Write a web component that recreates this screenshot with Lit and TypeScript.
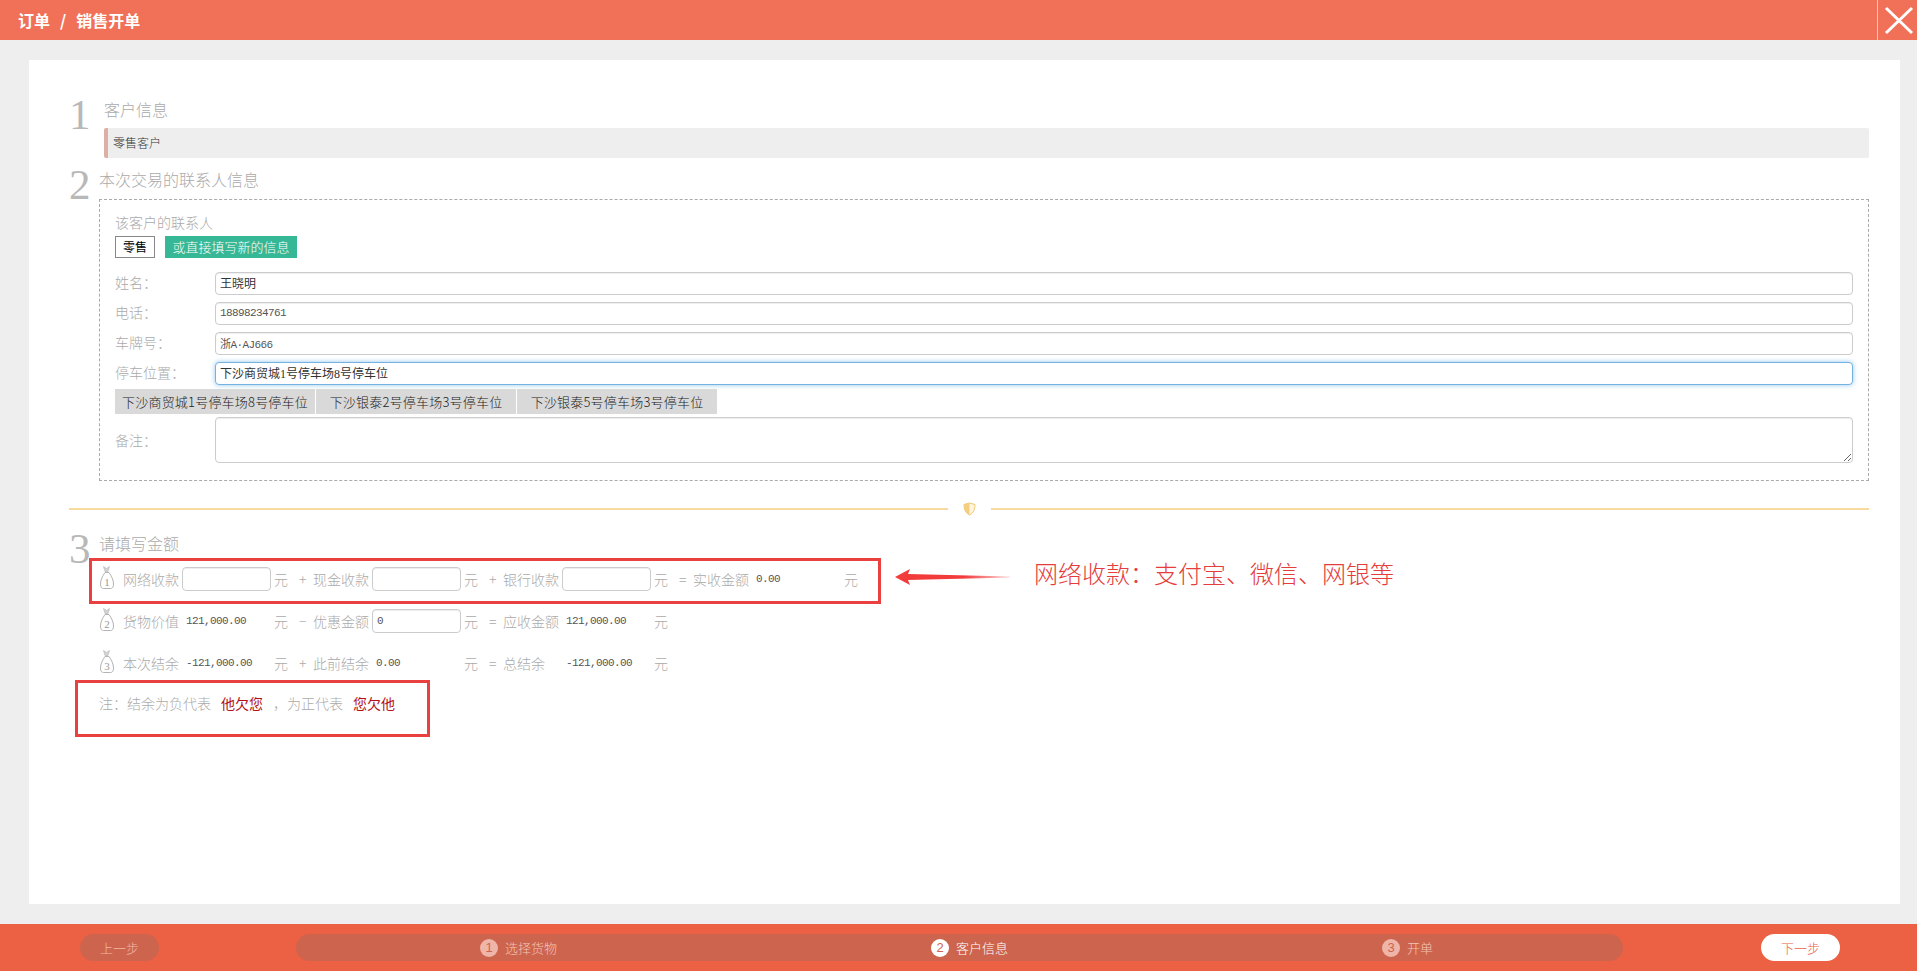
import { css, html, LitElement } from 'lit';
import { customElement } from 'lit/decorators.js';

const bag = (n: number) => html`
  <svg class="bag" width="16" height="25" viewBox="0 0 16 25">
    <path d="M4.500 1.500l3 2 3-2-1.500 5H6z" fill="#d4d4d4" stroke="#b4b4b4" stroke-width=".6" />
    <path d="M6 7.500C3.500 11 1.500 15 1.500 19c0 3 1 4.500 3 4.500h7c2 0 3-1.500 3-4.500 0-4-2-8-4.500-11.500z" fill="#fff" stroke="#b4b4b4" />
    <text x="8" y="20.500" text-anchor="middle" font-size="11" fill="#999" font-family="Liberation Serif, serif">${n}</text>
  </svg>
`;

@customElement('app-root')
export class AppRoot extends LitElement {
  static styles = css`
    :host {
      display: block;
      height: 971px;
      overflow: hidden;
      background: #eeeeee;
      color: #aaa;
      font-family: 'Noto Sans CJK SC', 'Liberation Sans', sans-serif;
      font-size: 14px;
      font-weight: 300;
    }

    .top {
      display: flex;
      align-items: center;
      justify-content: space-between;
      height: 40px;
      padding-left: 18px;
      background: #f07157;
      color: #fff;
      font-size: 16px;
      font-weight: 700;
    }

    .top .sep {
      margin: 0 10px;
    }

    .close {
      width: 39px;
      height: 40px;
      border-left: 1px solid #f9c4b6;
    }

    .card {
      position: relative;
      box-sizing: border-box;
      height: 844px;
      margin: 20px 17px 20px 29px;
      padding: 40px 31px 0 40px;
      background: #fff;
    }

    .section {
      display: flex;
    }

    .num {
      flex: none;
      width: 30px;
      margin-top: -7px;
      color: #b8b8b8;
      font-family: 'Liberation Serif', serif;
      font-size: 43px;
      line-height: 43px;
    }

    .first .num {
      width: 35px;
    }

    .body {
      flex: 1;
      min-width: 0;
    }

    .title {
      height: 20px;
      font-size: 16px;
      line-height: 18px;
    }

    .bar {
      height: 30px;
      margin-top: 8px;
      padding-left: 5px;
      border-left: 4px solid #dcb0a5;
      border-radius: 2px;
      background: #eeeeee;
      color: #333;
      font-size: 12px;
      line-height: 30px;
    }

    .second {
      margin-top: 12px;
    }

    .box {
      margin-top: 9px;
      padding: 13px 15px 17px;
      border: 1px dashed #aaa;
    }

    .sub {
      height: 20px;
      line-height: 18px;
    }

    .picks {
      display: flex;
      gap: 10px;
      margin: 3px 0 14px;
    }

    .pick {
      box-sizing: border-box;
      height: 22px;
      font-size: 13px;
      line-height: 20px;
      text-align: center;
    }

    .pick.person {
      width: 40px;
      border: 1px solid #888;
      color: #000;
      font-size: 12px;
      font-weight: 400;
    }

    .pick.fresh {
      width: 132px;
      background: #36b795;
      color: #fff;
      line-height: 22px;
    }

    .field {
      display: flex;
      align-items: center;
      margin-bottom: 7px;
    }

    .field label {
      flex: none;
      width: 100px;
      margin-top: -4px;
    }

    input,
    textarea {
      box-sizing: border-box;
      padding: 0 4px;
      border: 1px solid #ccc;
      border-radius: 4px;
      outline: none;
      background: #fff;
      box-shadow: inset 0 1px 1px rgba(0, 0, 0, 0.07);
      color: #333;
      font-family: 'Liberation Serif', 'Noto Sans CJK SC', serif;
      font-size: 12px;
    }

    .field input {
      flex: 1;
      height: 23px;
      padding-bottom: 2px;
    }

    .field input.mono,
    .money input {
      color: #555;
      font-family: 'Liberation Mono', 'Noto Sans CJK SC', monospace;
      font-size: 11px;
      letter-spacing: -0.6px;
    }

    .field input.on {
      border-color: #74b2e2;
      box-shadow: 0 0 5px rgba(102, 175, 233, 0.7);
    }

    .chips {
      display: flex;
      gap: 1px;
      margin: -3px 0 3px;
    }

    .chips span {
      width: 200px;
      height: 25px;
      background: #d9d9d9;
      color: #222;
      font-size: 13px;
      line-height: 25px;
      letter-spacing: 0.2px;
      text-align: center;
    }

    .memo {
      display: flex;
      align-items: center;
    }

    .memo label {
      flex: none;
      width: 100px;
    }

    .memo textarea {
      display: block;
      flex: 1;
      height: 46px;
    }

    .rule {
      display: flex;
      align-items: center;
      justify-content: space-between;
      height: 14px;
      margin: 21px 0 18px;
    }

    .rule i {
      flex: 1;
      height: 2px;
      background: #f8d9a0;
    }

    .rule span {
      display: flex;
      flex: none;
      justify-content: center;
      width: 43px;
    }

    .money {
      display: flex;
      align-items: center;
      height: 24px;
      margin-top: 18px;
    }

    .money.lead {
      margin-top: 13px;
    }

    .bag {
      flex: none;
      width: 16px;
      margin: -4px 8px 0 0;
    }

    .money input {
      width: 89px;
      height: 24px;
    }

    .group {
      display: grid;
      flex: none;
      grid-template-columns: 59px 90px 27px 14px;
      align-items: center;
    }

    .group.last {
      grid-template-columns: 62px 89px 20px;
    }

    .unit {
      padding-left: 2px;
    }

    .val {
      padding-left: 4px;
      color: #555;
      font-family: 'Liberation Mono', monospace;
      font-size: 11px;
      font-weight: 400;
      letter-spacing: -0.6px;
    }

    .last .val {
      padding-left: 1px;
    }

    .note {
      height: 20px;
      margin-top: 18px;
      line-height: 20px;
    }

    .note b {
      margin: 0 10px;
      color: #b3101a;
      font-weight: 400;
    }

    .mark {
      position: absolute;
      border: 3px solid #e8413f;
    }

    .mark.net {
      top: 498px;
      left: 60px;
      width: 786px;
      height: 40px;
    }

    .mark.rest {
      top: 620px;
      left: 46px;
      width: 349px;
      height: 51px;
    }

    .arrow {
      position: absolute;
      top: 509px;
      left: 866px;
    }

    .hint {
      position: absolute;
      top: 496px;
      left: 1005px;
      color: #e53c3c;
      font-size: 24px;
      line-height: 34px;
      white-space: nowrap;
    }

    .foot {
      display: flex;
      align-items: center;
      height: 47px;
      background: #ec6044;
      font-size: 13px;
    }

    .round {
      box-sizing: border-box;
      flex: none;
      height: 27px;
      border-radius: 14px;
      background: #cd654e;
      line-height: 27px;
      text-align: center;
    }

    .prev {
      width: 79px;
      margin: 0 137px 0 80px;
      color: #f3b7a8;
    }

    .next {
      width: 79px;
      margin-left: 138px;
      background: #fff;
      color: #ec6044;
    }

    .steps {
      display: grid;
      grid-template-columns: 451px 451px 1fr;
      width: 1327px;
      padding-left: 184px;
      text-align: left;
    }

    .step {
      display: flex;
      align-items: center;
      gap: 7px;
      color: #f4c3b6;
    }

    .step em {
      width: 18px;
      height: 18px;
      border-radius: 50%;
      background: #efb5a8;
      color: #cd654e;
      font-family: 'Liberation Sans', sans-serif;
      font-style: normal;
      line-height: 18px;
      text-align: center;
    }

    .step.on {
      color: #fff;
    }

    .step.on em {
      background: #fff;
    }
  `;

  render() {
    return html`
      <header class="top">
        <div>订单<span class="sep">/</span>销售开单</div>
        <div class="close">
          <svg width="39" height="40" viewBox="0 0 39 40">
            <path d="M8 8l26 25M34 8L8 33" stroke="#fff" stroke-width="3" fill="none" />
          </svg>
        </div>
      </header>

      <main class="card">
        <section class="section first">
          <div class="num">1</div>
          <div class="body">
            <div class="title">客户信息</div>
            <div class="bar">零售客户</div>
          </div>
        </section>

        <section class="section second">
          <div class="num">2</div>
          <div class="body">
            <div class="title">本次交易的联系人信息</div>
            <div class="box">
              <div class="sub">该客户的联系人</div>
              <div class="picks">
                <div class="pick person">零售</div>
                <div class="pick fresh">或直接填写新的信息</div>
              </div>
              <div class="field"><label>姓名：</label><input value="王晓明" /></div>
              <div class="field"><label>电话：</label><input class="mono" value="18898234761" /></div>
              <div class="field"><label>车牌号：</label><input class="mono" value="浙A·AJ666" /></div>
              <div class="field"><label>停车位置：</label><input class="on" value="下沙商贸城1号停车场8号停车位" /></div>
              <div class="chips">
                <span>下沙商贸城1号停车场8号停车位</span>
                <span>下沙银泰2号停车场3号停车位</span>
                <span>下沙银泰5号停车场3号停车位</span>
              </div>
              <div class="memo"><label>备注：</label><textarea></textarea></div>
            </div>
          </div>
        </section>

        <div class="rule">
          <i></i>
          <span>
            <svg width="13" height="14" viewBox="0 0 13 14">
              <path d="M6.500 1L12 2.500c0 5-1.500 8.500-5.500 10.500C2.500 11 1 7.500 1 2.500z" fill="#fff5dc" stroke="#eec877" />
              <path d="M6.500 1v12C2.500 11 1 7.500 1 2.500z" fill="#f3cf7f" />
            </svg>
          </span>
          <i></i>
        </div>

        <section class="section">
          <div class="num">3</div>
          <div class="body">
            <div class="title">请填写金额</div>
            <div class="money lead">
              ${bag(1)}
              <div class="group"><span>网络收款</span><input /><span class="unit">元</span><span>+</span></div>
              <div class="group"><span>现金收款</span><input /><span class="unit">元</span><span>+</span></div>
              <div class="group"><span>银行收款</span><input /><span class="unit">元</span><span>=</span></div>
              <div class="group last"><span>实收金额</span><span class="val">0.00</span><span>元</span></div>
            </div>
            <div class="money">
              ${bag(2)}
              <div class="group"><span>货物价值</span><span class="val">121,000.00</span><span class="unit">元</span><span>−</span></div>
              <div class="group"><span>优惠金额</span><input value="0" /><span class="unit">元</span><span>=</span></div>
              <div class="group"><span>应收金额</span><span class="val">121,000.00</span><span class="unit">元</span><span></span></div>
            </div>
            <div class="money">
              ${bag(3)}
              <div class="group"><span>本次结余</span><span class="val">-121,000.00</span><span class="unit">元</span><span>+</span></div>
              <div class="group"><span>此前结余</span><span class="val">0.00</span><span class="unit">元</span><span>=</span></div>
              <div class="group"><span>总结余</span><span class="val">-121,000.00</span><span class="unit">元</span><span></span></div>
            </div>
            <div class="note">注：结余为负代表<b>他欠您</b>，为正代表<b>您欠他</b></div>
          </div>
        </section>

        <div class="mark net"></div>
        <div class="mark rest"></div>
        <svg class="arrow" width="116" height="16" viewBox="0 0 116 16">
          <defs>
            <linearGradient id="tail" x1="0" x2="1" y1="0" y2="0">
              <stop offset="0.6" stop-color="#f23b3b" />
              <stop offset="1" stop-color="#f23b3b" stop-opacity="0.2" />
            </linearGradient>
          </defs>
          <path d="M0 8L15 0l-2 5 102 2.500v1L13 11l2 5z" fill="url(#tail)" />
        </svg>
        <div class="hint">网络收款：支付宝、微信、网银等</div>
      </main>

      <footer class="foot">
        <div class="round prev">上一步</div>
        <div class="round steps">
          <div class="step"><em>1</em>选择货物</div>
          <div class="step on"><em>2</em>客户信息</div>
          <div class="step"><em>3</em>开单</div>
        </div>
        <div class="round next">下一步</div>
      </footer>
    `;
  }
}

declare global {
  interface HTMLElementTagNameMap {
    'app-root': AppRoot;
  }
}
